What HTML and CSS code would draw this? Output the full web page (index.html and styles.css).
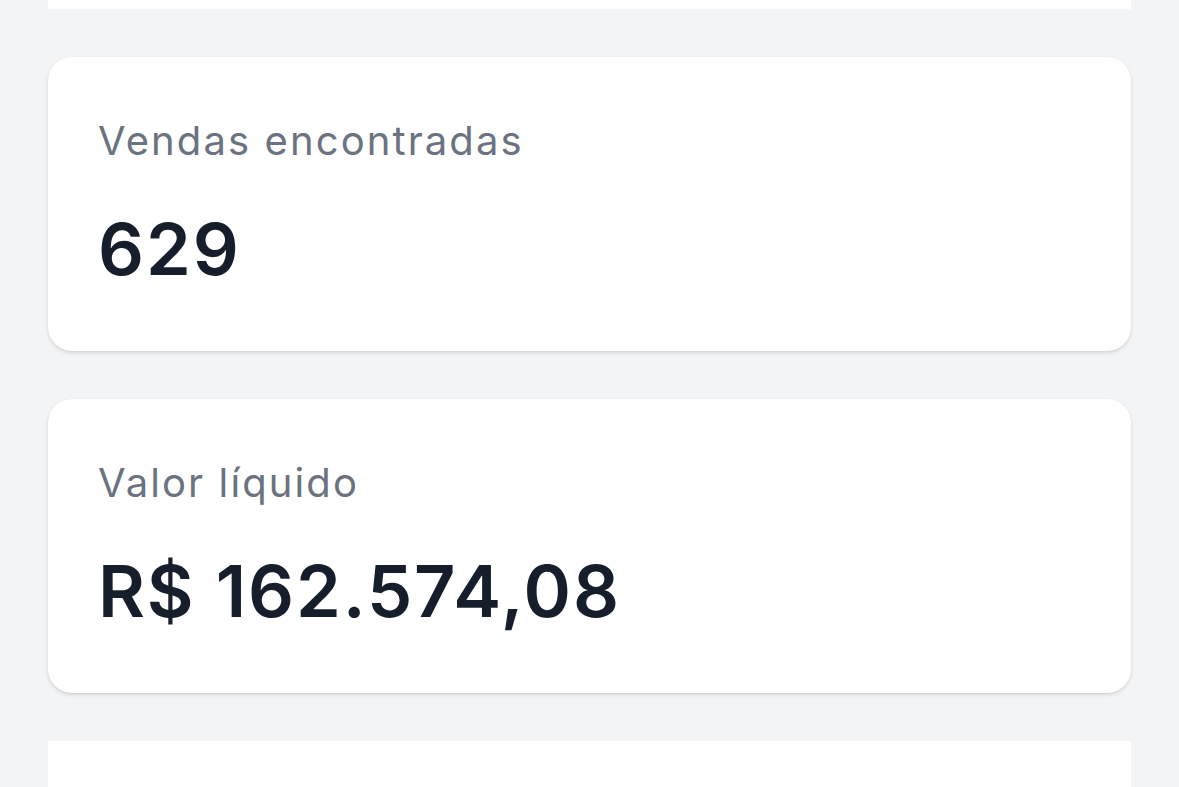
FILE: index.html
```html
<!DOCTYPE html>
<html lang="pt-BR">
<head>
<meta charset="utf-8">
<link rel="stylesheet" href="styles.css">
</head>
<body>
<main class="page">
  <div class="panel panel-top"></div>
  <section class="card">
    <div class="label">Vendas encontradas</div>
    <div class="value">629</div>
  </section>
  <section class="card">
    <div class="label">Valor líquido</div>
    <div class="value">R$ 162.574,08</div>
  </section>
  <div class="panel panel-bottom"></div>
</main>
</body>
</html>
```

FILE: styles.css
```css
html, body {
  margin: 0;
  padding: 0;
  background: #f3f4f6;
  height: 100%;
  overflow: hidden;
}
body {
  font-family: Inter, "Noto Sans", "Liberation Sans", sans-serif;
}
.page {
  display: flex;
  flex-direction: column;
  gap: 48px;
  padding: 0 48px;
  margin-top: -100px;
}
.panel {
  background: #ffffff;
}
.panel-top {
  height: 109px;
}
.panel-bottom {
  height: 46px;
}
.card {
  background: #ffffff;
  border-radius: 24px;
  box-shadow: 0 2px 4px rgba(0, 0, 0, 0.1), 0 1px 2px rgba(0, 0, 0, 0.06);
  padding: 60px 50px 59px;
  display: flex;
  flex-direction: column;
  gap: 41px;
  height: 294px;
  box-sizing: border-box;
}
.label {
  font-size: 40px;
  line-height: 48px;
  color: #6b7280;
  letter-spacing: 2.1px;
  font-weight: 400;
}
.value {
  font-size: 72px;
  line-height: 86px;
  color: #161d2b;
  font-weight: 600;
  letter-spacing: 1.9px;
}
```
